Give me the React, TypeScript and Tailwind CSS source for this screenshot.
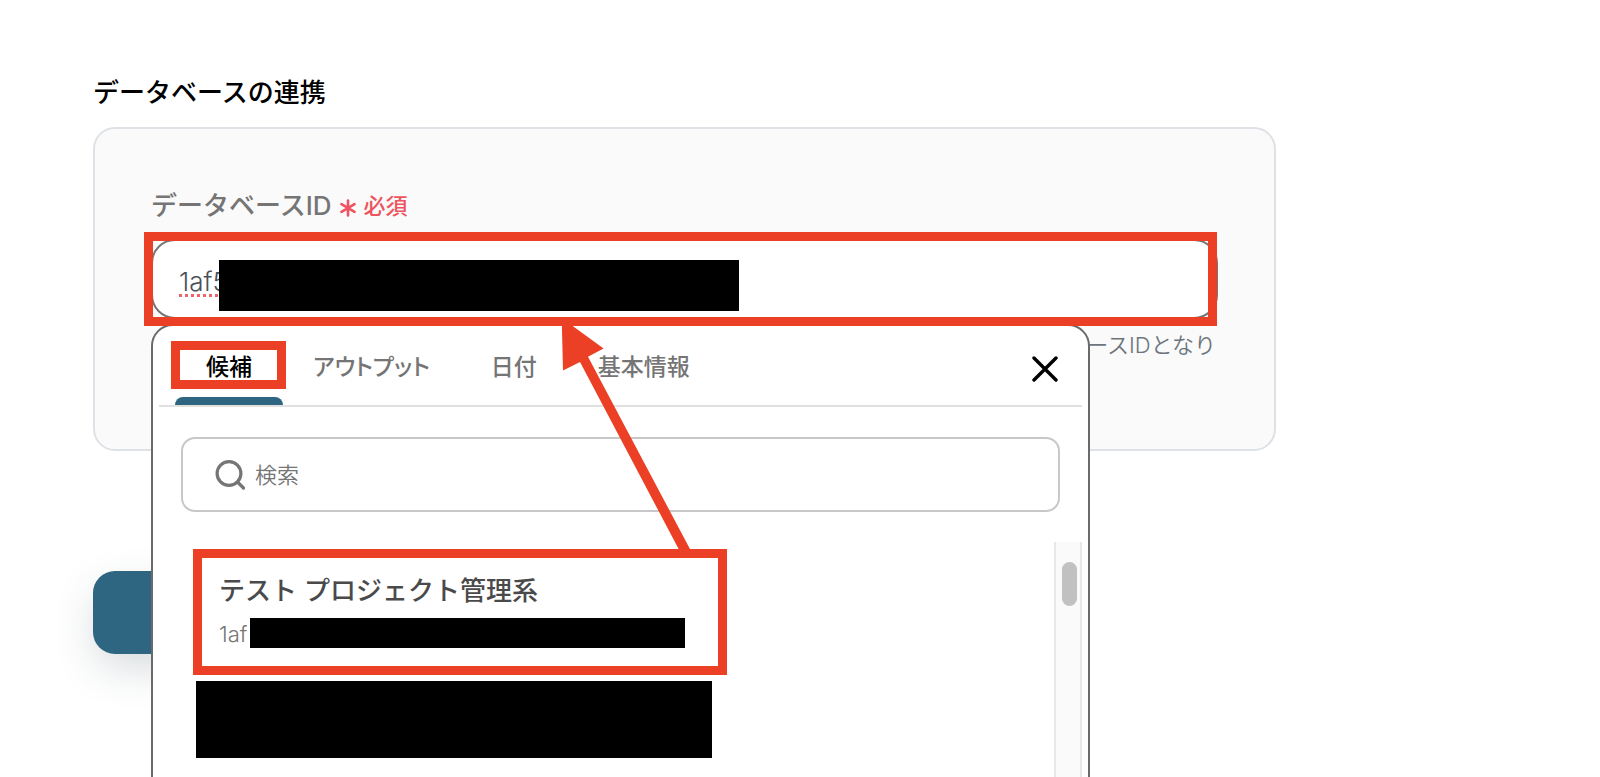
import { useState } from "react";

const TABS = ["候補", "アウトプット", "日付", "基本情報"];

export default function App() {
    return (
        <main className="relative h-screen overflow-hidden bg-white px-[93px] pt-[73px] font-['Inter','Noto_Sans_CJK_JP',sans-serif]">
            <h2 className="text-[26px] leading-10 font-medium text-black">データベースの連携</h2>
            <section className="mt-[14px] h-[324px] w-full max-w-[1183px] rounded-[22px] border-2 border-[#dee2e6] bg-[#fafafa] px-14 pt-[54px]">
                <DatabaseField />
            </section>
            <button
                type="button"
                aria-label="送信"
                className="mt-[120px] block h-[83px] w-[320px] rounded-[22px] bg-[#2e6580] shadow-[0_16px_44px_-4px_rgba(40,60,70,0.2)]"
            />
        </main>
    )
}

function DatabaseField() {
    const [value, setValue] = useState("1af5");

    return (
        <div>
            <label htmlFor="database-id" className="flex h-11 items-center text-[26px] font-medium text-[#757575]">
                データベースID
                <span className="mt-[2px] ml-2 flex items-center gap-2 text-[22px] text-[#ee5460]">
                    <svg viewBox="0 0 16 18" className="mt-1 h-[18px] w-4" fill="none" stroke="currentColor" strokeWidth="2.6" strokeLinecap="round">
                        <path d="M8 1.5v15M1.5 5.2l13 7.6M14.5 5.2l-13 7.6" />
                    </svg>
                    必須
                </span>
            </label>
            <div className="relative mt-3">
                <input
                    id="database-id"
                    value={value}
                    onChange={e => setValue(e.target.value)}
                    spellCheck={false}
                    className="block h-20 w-full rounded-[24px] border-2 border-[#757575] bg-white px-[26px] pt-1 text-[26px] font-[350] text-[#495057] underline decoration-[#f0626c] decoration-dotted decoration-[3px] underline-offset-3 outline-none"
                />
                <span className="absolute top-[21px] left-[68px] h-[51px] w-[520px] bg-black" />
                <p className="mt-2 pr-[2px] text-right text-[22px] leading-9 font-[350] text-[#6c757d]">データベースIDとなり</p>
                <SuggestPanel />
                <div className="pointer-events-none absolute -top-[7px] right-px -left-[7px] h-[94px] border-[9px] border-[#eb4025]" />
            </div>
        </div>
    )
}

function SuggestPanel() {
    const [active, setActive] = useState(0);

    return (
        <div className="absolute top-[85px] left-0 h-[520px] w-[88%] min-w-[920px] rounded-[22px] border-2 border-[#6a6a6a] bg-white px-[6px]">
            <div className="flex h-[81px] justify-between border-b-2 border-[#e0e0e0] pt-[15px] pr-6 pl-4">
                <div role="tablist" className="flex text-[23px] font-medium [font-feature-settings:'palt']">
                    {TABS.map((tab, i) => (
                        <button
                            key={tab}
                            type="button"
                            role="tab"
                            aria-selected={active === i}
                            onClick={() => setActive(i)}
                            className={`relative -mr-px flex h-16 justify-center px-[31px] pt-2 leading-9 ${active === i ? "text-black" : "text-[#757575]"}`}
                        >
                            {tab}
                            {active === i && (
                                <>
                                    <span className="absolute top-0 -left-1 h-12 w-[115px] border-[9px] border-[#eb4025]" />
                                    <span className="absolute inset-x-0 bottom-0 h-2 rounded-t-lg bg-[#2e6580]" />
                                </>
                            )}
                        </button>
                    ))}
                </div>
                <button type="button" aria-label="閉じる" className="mt-[15px] h-[26px] w-[26px]">
                    <svg viewBox="0 0 26 26" fill="none" stroke="black" strokeWidth="3.4" strokeLinecap="round">
                        <path d="M2 2l22 22M24 2L2 24" />
                    </svg>
                </button>
            </div>

            <label className="mx-[22px] mt-[30px] flex h-[75px] items-center rounded-[14px] border-2 border-[#c8c8c8] pl-8 text-[#757575]">
                <svg viewBox="0 0 30 30" className="h-[30px] w-[30px]" fill="none" stroke="currentColor" strokeWidth="3.2" strokeLinecap="round">
                    <circle cx="14" cy="13.5" r="11.9" />
                    <path d="M22.5 22l6 6" />
                </svg>
                <input type="search" aria-label="検索" placeholder="検索" className="ml-[10px] flex-1 bg-transparent pt-[2px] text-[22px] font-[350] outline-none placeholder:text-[#757575]" />
            </label>

            <div className="mt-[30px] flex h-[300px] justify-between">
                <ul className="pt-[7px] pl-[34px]">
                    <li className="h-[126px] w-[534px] border-[9px] border-[#eb4025] pt-[13px] pl-[17px]">
                        <p className="text-[26px] leading-10 font-medium text-[#4a4a4a]">テスト プロジェクト管理系</p>
                        <p className="mt-[7px] flex h-[30px] text-[22px] leading-8 font-[350] text-[#757575]">
                            <span className="w-[31px]">1af</span>
                            <span className="w-[435px] bg-black" />
                        </p>
                    </li>
                    <li className="mt-[6px] ml-[3px] h-[77px] w-[516px] bg-black" />
                </ul>
                <div className="w-7 border-x-2 border-[#e8e8e8] bg-[#fafafa] pt-5 pl-[6px]">
                    <div className="h-11 w-[15px] rounded-full bg-[#c1c1c1]" />
                </div>
            </div>

            {/* arrow from the candidate up to the ID field */}
            <svg viewBox="0 0 130 240" className="pointer-events-none absolute -top-[9px] left-[408px] h-[240px] w-[130px]" fill="#eb4025">
                <path d="M0.7 1L42.6 31.5L27 39.7L130 234H118.7L19 45L2 53.4Z" />
            </svg>
        </div>
    )
}
